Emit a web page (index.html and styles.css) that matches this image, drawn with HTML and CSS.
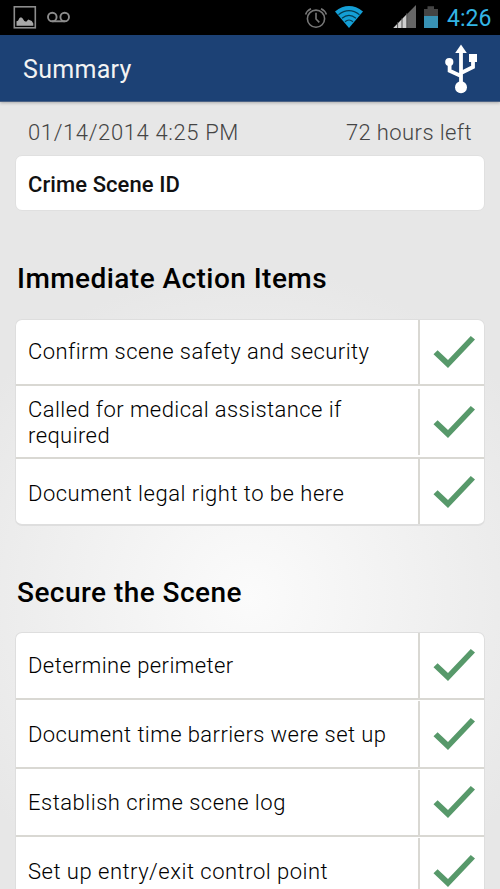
FILE: index.html
```html
<!DOCTYPE html>
<html lang="en">
<head>
<meta charset="utf-8">
<title>Summary</title>
<link rel="stylesheet" href="styles.css">
</head>
<body>
<svg class="defs" width="0" height="0" aria-hidden="true">
  <symbol id="check" viewBox="0 0 42 32"><path d="M0.5 18.3L4.6 14.2L15 24L37.8 0L42 3.4L15 32Z" fill="#57996a"/></symbol>
</svg>
<div class="screen">
  <div class="status">
    <svg class="status-left" width="80" height="35" viewBox="0 0 80 35">
      <rect x="14.3" y="6.8" width="21" height="21" fill="none" stroke="#8c8c8c" stroke-width="1.6"/>
      <path d="M16.5 25.8V21.3L18 20.7L19.5 18L21 17.3L22.5 18.3L24.3 21L26.2 21.8L28.3 19.6L30 20.2L31.8 21L33.3 23.5V25.8Z" fill="#a8a8a8"/>
      <g fill="none" stroke="#8c8c8c" stroke-width="1.9"><circle cx="52.3" cy="17" r="4.3"/><circle cx="64.7" cy="17" r="4.3"/><path d="M52.3 21.3H64.7"/></g>
    </svg>
    <div class="status-right">
      <svg width="136" height="35" viewBox="304 0 136 35">
        <g fill="none" stroke="#777" stroke-width="1.6"><circle cx="316" cy="18.7" r="8.6"/><path d="M316 12.8V19L319.3 22.4M305.6 14.5Q307 10.5 311 8.8M326.4 14.5Q325 10.5 321 8.8"/></g>
        <path d="M335 11.4Q349 0.8 363 11.4L349 28Z" fill="#149fd6"/>
        <g fill="none" stroke="#063c52" stroke-width="1.2"><path d="M338.5 14.7Q349 6.7 359.5 14.7M342 18.2Q349 12.6 356 18.2M345 21.7Q349 18.3 353 21.7"/></g>
        <path d="M393.3 28L416 5V28Z" fill="#666"/>
        <path d="M393.3 28L407 14V28Z" fill="#cfcfcf"/>
        <path d="M397.6 22V28M402 18V28M406.8 13V28" stroke="#444" stroke-width="0.9"/>
        <path d="M424 9H427.5V6.3H434V9H438V28H424Z" fill="#444"/>
        <rect x="424" y="16" width="14" height="12" fill="#3892b5"/>
      </svg>
      <span class="clock">4:26</span>
    </div>
  </div>
  <header class="bar">
    <h1 class="title">Summary</h1>
    <svg class="usb" width="36" height="52" viewBox="443 43 36 52">
      <path d="M461 50V86M449.6 62V70.8L461 76M473 60V67L461 73" fill="none" stroke="#fff" stroke-width="3.8"/>
      <path d="M461 44.4L466.8 53H455.2Z" fill="#fff"/>
      <circle cx="461" cy="87.2" r="6" fill="#fff"/><circle cx="449.3" cy="62" r="4.1" fill="#fff"/>
      <rect x="469" y="54" width="8" height="8" fill="#fff"/>
    </svg>
  </header>
  <main class="content">
    <div class="meta"><span class="date">01/14/2014 4:25 PM</span><span class="left">72 hours left</span></div>
    <div class="card">Crime Scene ID</div>
    <h2 class="heading action">Immediate Action Items</h2>
    <ul class="list">
      <li class="row first"><span class="label">Confirm scene safety and security</span><span class="tick"><svg><use href="#check"/></svg></span></li>
      <li class="row tall"><span class="label">Called for medical assistance if required</span><span class="tick"><svg><use href="#check"/></svg></span></li>
      <li class="row last"><span class="label wide">Document legal right to be here</span><span class="tick"><svg><use href="#check"/></svg></span></li>
    </ul>
    <h2 class="heading secure">Secure the Scene</h2>
    <ul class="list">
      <li class="row first scene"><span class="label">Determine perimeter</span><span class="tick"><svg><use href="#check"/></svg></span></li>
      <li class="row"><span class="label">Document time barriers were set up</span><span class="tick"><svg><use href="#check"/></svg></span></li>
      <li class="row"><span class="label wide">Establish crime scene log</span><span class="tick"><svg><use href="#check"/></svg></span></li>
      <li class="row"><span class="label wide">Set up entry/exit control point</span><span class="tick"><svg><use href="#check"/></svg></span></li>
    </ul>
  </main>
</div>
</body>
</html>
```
FILE: styles.css
```css
* { box-sizing: border-box; }
body { margin: 0; font-family: Roboto, "Liberation Sans", sans-serif; }
h1, h2, ul { margin: 0; padding: 0; }
svg { display: block; }
.defs { position: absolute; }
.screen { width: 500px; height: 889px; overflow: hidden; display: flex; flex-direction: column; }
.status { height: 35px; flex: none; background: #000; display: flex; justify-content: space-between; }
.status-right { display: flex; padding-right: 9px; }
.clock { width: 44px; margin-left: 7px; line-height: 37px; font-size: 23px; color: #33b5e5; white-space: nowrap; }
.bar { height: 67px; flex: none; background: #1c4175; border-bottom: 1px solid #4b6285; display: flex; justify-content: space-between; padding: 8px 21px 0 23px; box-shadow: 0 1px 3px rgba(0,0,0,.25); z-index: 1; }
.title { font-size: 25px; line-height: 54px; font-weight: 400; letter-spacing: .3px; color: #f3f3f3; }
.content { flex: 1; min-height: 0; padding: 14px 15px 0; background: radial-gradient(circle 330px at 250px 495px, #fbfbfb 0%, #f1f1f1 50%, #e7e7e7 100%); }
.meta { display: flex; justify-content: space-between; padding: 0 13px; height: 39px; line-height: 33px; font-size: 22px; font-weight: 300; color: #444; letter-spacing: .63px; }
.left { letter-spacing: .4px; }
.card { height: 56px; padding-left: 12px; background: #fff; border: 1px solid #e0e0e0; border-radius: 7px; font-size: 22px; line-height: 57px; font-weight: 500; letter-spacing: .08px; color: #111; }
.heading { padding-left: 2px; font-size: 28px; line-height: 34px; font-weight: 500; letter-spacing: .45px; color: #000; }
.action { margin: 51px 0 23px; }
.secure { margin: 50px 0 22px; }
.list { list-style: none; background: #fff; border: 1px solid #dedede; border-bottom-width: 2px; border-radius: 7px; }
.row { display: flex; height: 68.6px; padding-top: 1px; border-bottom: 2px solid #d9d8d3; }
.first { height: 66px; padding: 0; }
.scene { height: 67px; }
.tall { height: 73px; padding: 3px 0 2px; }
.last { height: 65px; border: 0; padding: 0; }
.label { flex: 1; display: flex; align-items: center; padding: 2px 26px 0 12px; font-size: 22px; line-height: 26px; font-weight: 300; color: #000; letter-spacing: .42px; }
.first .label { padding-top: 0; }
.last .label { padding-top: 4px; }
.wide { letter-spacing: .5px; }
.tick { width: 66px; border-left: 2px solid #d9d8d3; display: flex; align-items: center; padding-left: 13px; }
.tick svg { width: 42px; height: 32px; }
.first .tick { padding-bottom: 1px; }
```
